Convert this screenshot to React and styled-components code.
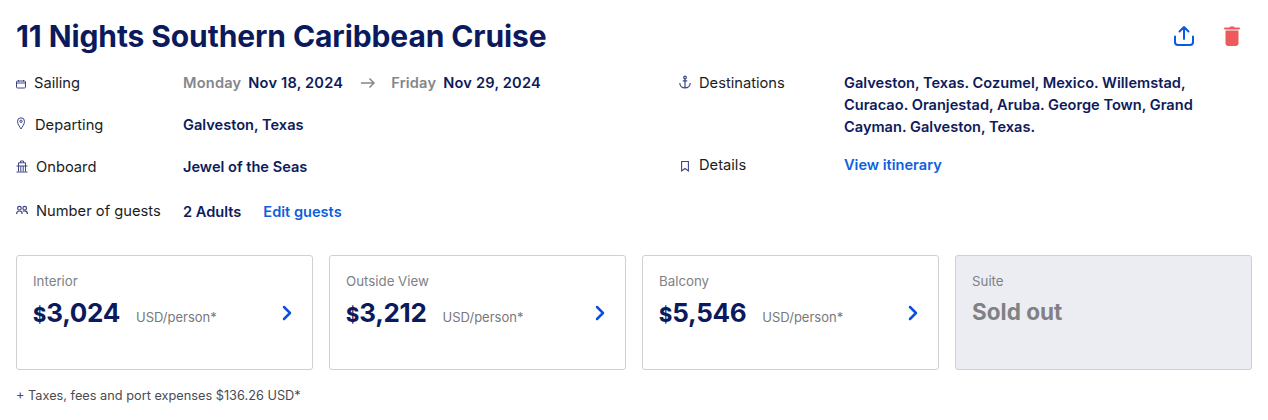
import React from 'react';
import styled, { createGlobalStyle } from 'styled-components';

const GlobalStyle = createGlobalStyle`
    html, body {
        margin: 0;
        background: #fff;
        font-family: Inter, "Liberation Sans", sans-serif;
    }
`

const Page = styled.div`
    width: 1268px;
    height: 420px;
    box-sizing: border-box;
    padding: 16px 16px 0;
    overflow: hidden;
`

const Header = styled.div`
    display: flex;
    justify-content: space-between;
    height: 40px;
`

const Title = styled.h1`
    margin: 0;
    color: #0b1a5c;
    font-size: 30px;
    line-height: 40px;
    font-weight: 700;
    letter-spacing: -0.1px;
`

const Actions = styled.div`
    display: flex;
    align-items: center;
    gap: 29px;
    padding-right: 12px;
`

const IconButton = styled.button`
    display: flex;
    padding: 0;
    border: 0;
    background: none;
    color: ${props => props.color};
`

const Details = styled.div`
    display: grid;
    grid-template-columns: 663px 1fr;
    margin-top: 16px;
`

const Column = styled.div`
    display: flex;
    flex-direction: column;
`

const Row = styled.div`
    display: grid;
    grid-template-columns: ${props => props.$labelWidth || 167}px 1fr;
    min-height: ${props => props.$height}px;
`

const Label = styled.div`
    display: flex;
    align-items: flex-start;
    gap: ${props => props.$gap}px;
    color: #1b1c24;
    font-size: 14.7px;
    line-height: 22px;
    white-space: nowrap;
`

const IconSlot = styled.span`
    display: flex;
    justify-content: center;
    align-items: center;
    height: 22px;
    margin-left: ${props => props.$inset || 0}px;
    color: #3d4684;
    flex: none;
`

const Value = styled.div`
    display: flex;
    align-items: center;
    align-self: flex-start;
    padding-top: ${props => props.$nudge || 0}px;
    color: #0e1b5b;
    font-size: 14.6px;
    line-height: 22px;
    font-weight: 600;
`

const DateText = styled.span`
    letter-spacing: 0.2px;
`

const Muted = styled.span`
    color: #85868a;
    margin-right: 7px;
    letter-spacing: 0.2px;
`

const Arrow = styled.span`
    display: flex;
    margin: 0 16px 0 18px;
    color: #85868a;
`

const Link = styled.a`
    color: #0e5fe0;
    margin-left: ${props => props.$gap || 0}px;
    font-weight: 600;
`

const Cards = styled.div`
    display: grid;
    grid-template-columns: repeat(4, 297px);
    gap: 16px;
    margin-top: 21px;
`

const Card = styled.div`
    position: relative;
    box-sizing: border-box;
    height: 115px;
    padding: 17px 16px;
    border: 1px solid #cfd0d4;
    border-radius: 3px;
    background: ${props => props.$soldOut ? '#ecedf2' : '#fff'};
`

const CardName = styled.div`
    color: #808185;
    font-size: 13.3px;
    line-height: 16px;
`

const PriceRow = styled.div`
    display: flex;
    align-items: baseline;
    margin-top: 6px;
    color: #0b1a5c;
`

const Currency = styled.span`
    font-size: 20px;
    font-weight: 800;
`

const Price = styled.span`
    font-size: 26px;
    line-height: 36px;
    font-weight: 700;
    letter-spacing: -0.3px;
`

const Unit = styled.span`
    margin-left: 16px;
    color: #77787c;
    font-size: 13px;
`

const SoldOut = styled.div`
    margin-top: 5px;
    color: #808185;
    font-size: 22.5px;
    line-height: 36px;
    font-weight: 700;
`

const Chevron = styled.span`
    position: absolute;
    right: 20px;
    top: 49px;
    display: flex;
    color: #0b4fe0;
`

const Footnote = styled.p`
    margin: 18px 0 0;
    color: #4a4b50;
    font-size: 12.75px;
    line-height: 16px;
`

const CalendarIcon = () => (
    <svg width="10" height="22" viewBox="0 0 10 22" fill="none" stroke="currentColor" strokeWidth="1">
        <rect x="0.5" y="9" width="9" height="7" rx="1" />
        <path d="M.5 11h9M2.500 8v1.500M7.500 8v1.500" />
    </svg>
)

const PinIcon = () => (
    <svg width="8" height="22" viewBox="0 0 8 22" fill="none" stroke="currentColor" strokeWidth="1">
        <path d="M4 15C3 13 .5 10.500.5 7.300a3.500 3.500 0 0 1 7 0C7.500 10.500 5 13 4 15z" />
        <circle cx="4" cy="7.300" r="1.200" />
    </svg>
)

const ShipIcon = () => (
    <svg width="12" height="22" viewBox="0 0 12 22" fill="none" stroke="currentColor" strokeWidth="1">
        <path d="M4.500 6.500V5h3v1.500M2.500 10V6.800h7V10M.5 10h11M2.500 10v5.500M4.800 10v5.500M7.200 10v5.500M9.500 10v5.500M.5 16h11" />
    </svg>
)

const GuestsIcon = () => (
    <svg width="12" height="22" viewBox="0 0 12 22" fill="none" stroke="currentColor" strokeWidth="1.200">
        <circle cx="3.400" cy="8.200" r="1.800" />
        <circle cx="8.700" cy="8.200" r="1.800" />
        <path d="M.6 14c0-2 1.200-3 2.800-3s2.800 1 2.800 3M6.700 11.200c.5-.2 1.200-.3 2-.3 1.700 0 2.700 1 2.700 3.100" />
    </svg>
)

const AnchorIcon = () => (
    <svg width="12" height="22" viewBox="0 0 12 22" fill="none" stroke="currentColor" strokeWidth="1.200">
        <circle cx="6" cy="5.500" r="1.300" />
        <path d="M6 6.800V16M3.800 8.800h4.400M.8 11c0 2.800 2.200 4.800 5.200 4.800s5.200-2 5.200-4.800" />
    </svg>
)

const BookmarkIcon = () => (
    <svg width="8" height="22" viewBox="0 0 8 22" fill="none" stroke="currentColor" strokeWidth="1.100">
        <path d="M.6 7.500h6.800v9.500L4 14.500.6 17z" />
    </svg>
)

const ArrowRightIcon = () => (
    <svg width="14" height="12" viewBox="0 0 14 12" fill="none" stroke="currentColor" strokeWidth="1.500">
        <path d="M0 6h13M8.500 1.500 13 6l-4.500 4.500" />
    </svg>
)

const ShareIcon = () => (
    <svg width="22" height="22" viewBox="0 0 22 22" fill="none" stroke="currentColor" strokeWidth="2" strokeLinecap="round" strokeLinejoin="round">
        <path d="M11 14V2M6.500 6.500 11 2l4.500 4.500M2 11.500V17a3 3 0 0 0 3 3h12a3 3 0 0 0 3-3v-5.500" />
    </svg>
)

const TrashIcon = () => (
    <svg width="16" height="20" viewBox="0 0 16 20" fill="currentColor">
        <path d="M5.500 1.500 6 .5h4l.5 1H15a1 1 0 0 1 0 2H1a1 1 0 0 1 0-2zM1.500 4.500h13V17a3 3 0 0 1-3 3h-7a3 3 0 0 1-3-3z" />
    </svg>
)

const ChevronIcon = () => (
    <svg width="10" height="16" viewBox="0 0 10 16" fill="none" stroke="currentColor" strokeWidth="2.500" strokeLinecap="round" strokeLinejoin="round">
        <path d="M2 2l6 6-6 6" />
    </svg>
)

const DetailLabel = ({ icon, gap, inset, children }) => (
    <Label $gap={gap}>
        <IconSlot $inset={inset}>{icon}</IconSlot>
        {children}
    </Label>
)

const PriceCard = ({ name, price }) => (
    <Card>
        <CardName>{name}</CardName>
        <PriceRow>
            <Currency>$</Currency>
            <Price>{price}</Price>
            <Unit>USD/person*</Unit>
        </PriceRow>
        <Chevron><ChevronIcon /></Chevron>
    </Card>
)

const App = () => (
    <Page>
        <GlobalStyle />
        <Header>
            <Title>11 Nights Southern Caribbean Cruise</Title>
            <Actions>
                <IconButton color="#0b5be0"><ShareIcon /></IconButton>
                <IconButton color="#ee5a5c"><TrashIcon /></IconButton>
            </Actions>
        </Header>
        <Details>
            <Column>
                <Row $height={42}>
                    <DetailLabel gap={8} icon={<CalendarIcon />}>Sailing</DetailLabel>
                    <Value>
                        <Muted>Monday</Muted><DateText>Nov 18, 2024</DateText>
                        <Arrow><ArrowRightIcon /></Arrow>
                        <Muted>Friday</Muted><DateText>Nov 29, 2024</DateText>
                    </Value>
                </Row>
                <Row $height={42}>
                    <DetailLabel gap={10} inset={1} icon={<PinIcon />}>Departing</DetailLabel>
                    <Value>Galveston, Texas</Value>
                </Row>
                <Row $height={44}>
                    <DetailLabel gap={8} icon={<ShipIcon />}>Onboard</DetailLabel>
                    <Value>Jewel of the Seas</Value>
                </Row>
                <Row $height={34}>
                    <DetailLabel gap={8} icon={<GuestsIcon />}>Number of guests</DetailLabel>
                    <Value $nudge={1}>2 Adults<Link $gap={22}>Edit guests</Link></Value>
                </Row>
            </Column>
            <Column>
                <Row $height={82} $labelWidth={165}>
                    <DetailLabel gap={8} icon={<AnchorIcon />}>Destinations</DetailLabel>
                    <Value>Galveston, Texas. Cozumel, Mexico. Willemstad, Curacao. Oranjestad, Aruba. George Town, Grand Cayman. Galveston, Texas.</Value>
                </Row>
                <Row $height={40} $labelWidth={165}>
                    <DetailLabel gap={10} inset={2} icon={<BookmarkIcon />}>Details</DetailLabel>
                    <Value><Link>View itinerary</Link></Value>
                </Row>
            </Column>
        </Details>
        <Cards>
            <PriceCard name="Interior" price="3,024" />
            <PriceCard name="Outside View" price="3,212" />
            <PriceCard name="Balcony" price="5,546" />
            <Card $soldOut>
                <CardName>Suite</CardName>
                <SoldOut>Sold out</SoldOut>
            </Card>
        </Cards>
        <Footnote>+ Taxes, fees and port expenses $136.26 USD*</Footnote>
    </Page>
)

export default App;
